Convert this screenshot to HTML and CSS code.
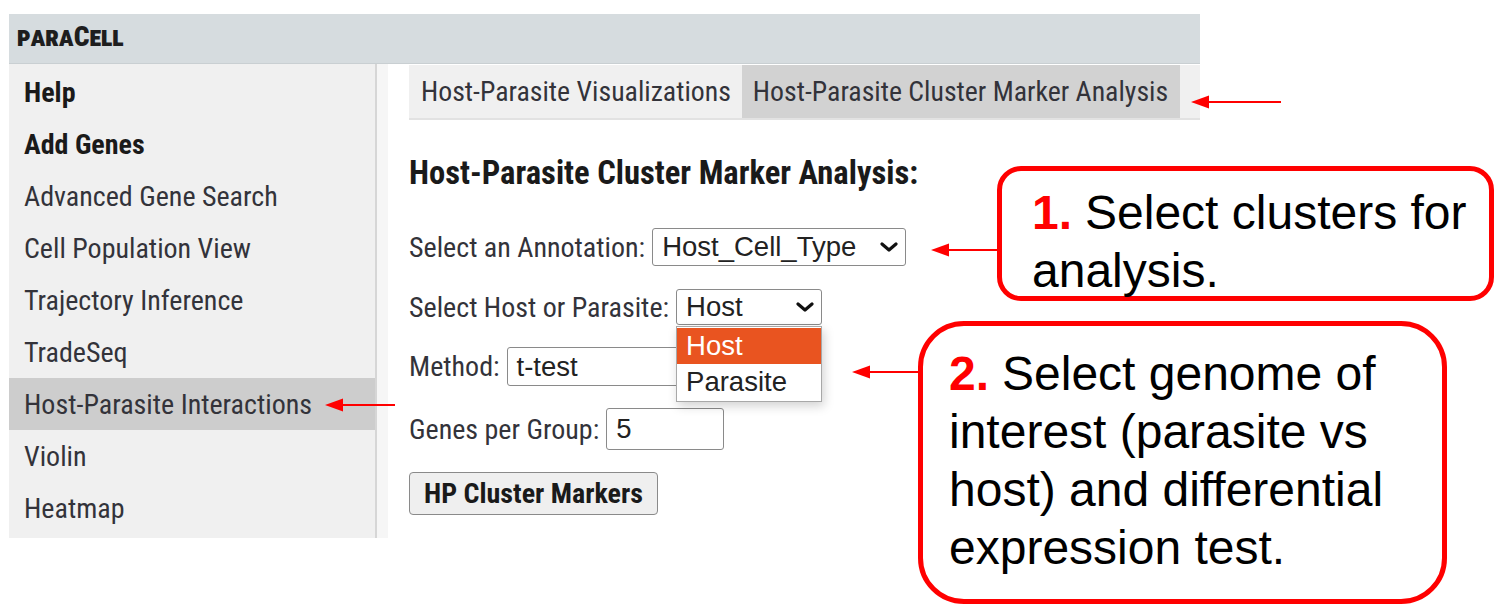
FILE: index.html
```html
<!DOCTYPE html>
<html lang="en">
<head>
<meta charset="utf-8">
<title>paraCell – Host-Parasite Cluster Marker Analysis</title>
<link rel="stylesheet" href="styles.css">
</head>
<body>
<div class="canvas">
  <div class="app">
    <header class="topbar"><span class="brand">paraCell</span></header>
    <div class="app-body">
      <nav class="sidebar">
        <a class="nav-item strong">Help</a>
        <a class="nav-item strong">Add Genes</a>
        <a class="nav-item">Advanced Gene Search</a>
        <a class="nav-item">Cell Population View</a>
        <a class="nav-item">Trajectory Inference</a>
        <a class="nav-item">TradeSeq</a>
        <a class="nav-item active">Host-Parasite Interactions</a>
        <a class="nav-item">Violin</a>
        <a class="nav-item">Heatmap</a>
      </nav>
      <div class="gutter"></div>
      <main class="main">
        <div class="tabs">
          <div class="tab">Host-Parasite Visualizations</div>
          <div class="tab active">Host-Parasite Cluster Marker Analysis</div>
        </div>
        <h2 class="heading">Host-Parasite Cluster Marker Analysis:</h2>
        <div class="form">
          <div class="row row-annot">
            <label>Select an Annotation:</label>
            <div class="select select-annot">
              <span class="value">Host_Cell_Type</span>
              <svg class="chev" viewBox="0 0 18 10"><path d="M2 2 L9 8 L16 2" /></svg>
            </div>
          </div>
          <div class="row row-genome">
            <label>Select Host or Parasite:</label>
            <div class="select-wrap">
              <div class="select select-genome">
                <span class="value">Host</span>
                <svg class="chev" viewBox="0 0 18 10"><path d="M2 2 L9 8 L16 2" /></svg>
              </div>
              <ul class="dropdown">
                <li class="opt selected">Host</li>
                <li class="opt">Parasite</li>
              </ul>
            </div>
          </div>
          <div class="row row-method">
            <label>Method:</label>
            <div class="input input-method">t-test</div>
          </div>
          <div class="row row-genes">
            <label>Genes per Group:</label>
            <div class="input input-genes">5</div>
          </div>
          <div class="row row-btn">
            <button class="btn">HP Cluster Markers</button>
          </div>
        </div>
      </main>
    </div>
  </div>

  <svg class="arrow arrow-nav" viewBox="0 0 70 16"><line x1="16" y1="8" x2="70" y2="8" /><polygon points="0,8 18,1.5 18,14.5" /></svg>
  <svg class="arrow arrow-tab" viewBox="0 0 90 16"><line x1="16" y1="8" x2="90" y2="8" /><polygon points="0,8 18,1.5 18,14.5" /></svg>
  <svg class="arrow arrow-c1" viewBox="0 0 68 16"><line x1="16" y1="8" x2="68" y2="8" /><polygon points="0,8 18,1.5 18,14.5" /></svg>
  <svg class="arrow arrow-c2" viewBox="0 0 68 16"><line x1="16" y1="8" x2="68" y2="8" /><polygon points="0,8 18,1.5 18,14.5" /></svg>

  <div class="callout callout-1">
    <span class="line"><b class="num">1.</b><span class="gap"></span>Select clusters for</span>
    <span class="line">analysis.</span>
  </div>
  <div class="callout callout-2">
    <span class="line"><b class="num">2.</b><span class="gap"></span>Select genome of</span>
    <span class="line">interest (parasite vs</span>
    <span class="line">host) and differential</span>
    <span class="line">expression test.</span>
  </div>
</div>
</body>
</html>
```

FILE: styles.css
```css
* { box-sizing: border-box; }

html, body {
  margin: 0;
  padding: 0;
  background: #ffffff;
}

.canvas {
  position: relative;
  width: 1501px;
  height: 616px;
  overflow: hidden;
  padding: 14px 0 0 9px;
  font-family: "Roboto Condensed", "Liberation Sans Narrow", "Arial Narrow", Roboto, sans-serif;
  color: #333;
}

.app {
  width: 1191px;
}

.topbar {
  height: 50px;
  background: #d6dcdf;
  border-bottom: 1px solid #c9cfd2;
  display: flex;
  align-items: center;
  padding-left: 8px;
}

.brand {
  font-variant: small-caps;
  font-weight: 900;
  font-size: 27.5px;
  color: #1e1e1e;
  margin-top: -4px;
}

.app-body {
  display: flex;
  height: 474px;
}

.sidebar {
  width: 368px;
  background: #f0f0f0;
  border-right: 2px solid #d6d6d6;
  padding-top: 2px;
  display: flex;
  flex-direction: column;
}

.nav-item {
  display: flex;
  align-items: center;
  height: 52px;
  padding-left: 15px;
  font-size: 28px;
  color: #33333a;
}

.nav-item.strong {
  font-weight: 700;
  color: #1a1a1a;
}

.nav-item.active {
  background: #cdcdcd;
}

.gutter {
  width: 11px;
  background: #f6f6f6;
}

.main {
  flex: 1;
  padding-left: 21px;
  padding-top: 1px;
}

.tabs {
  display: flex;
  height: 55px;
  background: #f0f0f0;
  border-bottom: 2px solid #e2e2e2;
}

.tab {
  display: flex;
  align-items: center;
  padding: 0 11px 0 12px;
  font-size: 27.8px;
  color: #33333a;
}

.tab.active {
  background: #d2d2d2;
  padding: 0 12px 0 11px;
}

.heading {
  margin: 34px 0 0 0;
  font-size: 32.6px;
  line-height: 38px;
  font-weight: 700;
  color: #1a1a1a;
}

.form {
  margin-top: 36px;
  display: flex;
  flex-direction: column;
  gap: 22px;
}

.row {
  display: flex;
  align-items: center;
}

.row label {
  font-size: 28px;
  color: #33333a;
  margin-right: 7px;
}

.row-annot { height: 38px; }
.row-genome { height: 36px; margin-top: 1px; }
.row-method { height: 39px; }
.row-genes { height: 42px; }
.row-btn { height: 43px; }

.select,
.input {
  height: 100%;
  border: 1.5px solid #8a8a8a;
  border-radius: 3px;
  background: #fff;
  font-family: "Liberation Sans", Arial, sans-serif;
  font-size: 27.5px;
  color: #222;
  display: flex;
  align-items: center;
  padding-left: 9px;
}

.select {
  justify-content: space-between;
  padding-right: 7px;
}

.select-annot { width: 254px; }

.select-wrap {
  position: relative;
  height: 100%;
}

.select-genome { width: 146px; }

.chev {
  width: 18px;
  height: 10px;
  fill: none;
  stroke: #111;
  stroke-width: 3.2;
  stroke-linecap: round;
  stroke-linejoin: round;
}

.dropdown {
  position: absolute;
  left: 0;
  top: 37px;
  width: 146px;
  margin: 0;
  padding: 1px 0;
  list-style: none;
  background: #fff;
  border: 1px solid #a8a8a8;
  box-shadow: 2px 4px 10px rgba(0, 0, 0, 0.18);
  font-family: "Liberation Sans", Arial, sans-serif;
  font-size: 27.5px;
  color: #222;
  z-index: 2;
}

.opt {
  height: 36px;
  line-height: 36px;
  padding-left: 9px;
}

.opt.selected {
  background: #e95420;
  color: #fff;
}

.input-method { width: 190px; }
.input-genes { width: 118px; }

.btn {
  height: 43px;
  padding: 0 14px;
  font-family: inherit;
  font-weight: 700;
  font-size: 28px;
  color: #1a1a1a;
  background: #efefef;
  border: 1.5px solid #8a8a8a;
  border-radius: 4px;
}

/* annotation overlays */
.arrow {
  position: absolute;
  height: 16px;
  overflow: visible;
}

.arrow line {
  stroke: #ff0000;
  stroke-width: 2;
}

.arrow polygon {
  fill: #ff0000;
}

.arrow-nav { left: 325px; top: 397px; width: 70px; }
.arrow-tab { left: 1191px; top: 94px; width: 90px; }
.arrow-c1 { left: 931px; top: 242px; width: 68px; }
.arrow-c2 { left: 852px; top: 364px; width: 68px; }

.callout {
  position: absolute;
  background: #fff;
  border: 5px solid #ff0000;
  font-family: "Liberation Sans", Arial, sans-serif;
  font-size: 48px;
  line-height: 58px;
  color: #000;
  display: flex;
  flex-direction: column;
}

.callout .line {
  display: flex;
  white-space: nowrap;
}

.callout .num {
  color: #ff0000;
  font-weight: 700;
}

.callout .gap {
  width: 13px;
}

.callout-1 {
  left: 997px;
  top: 166px;
  width: 497px;
  height: 135px;
  border-radius: 24px;
  padding: 13px 10px 0 30px;
}

.callout-2 {
  left: 918px;
  top: 321px;
  width: 529px;
  height: 283px;
  border-radius: 46px;
  padding: 19px 10px 0 26px;
}
```
